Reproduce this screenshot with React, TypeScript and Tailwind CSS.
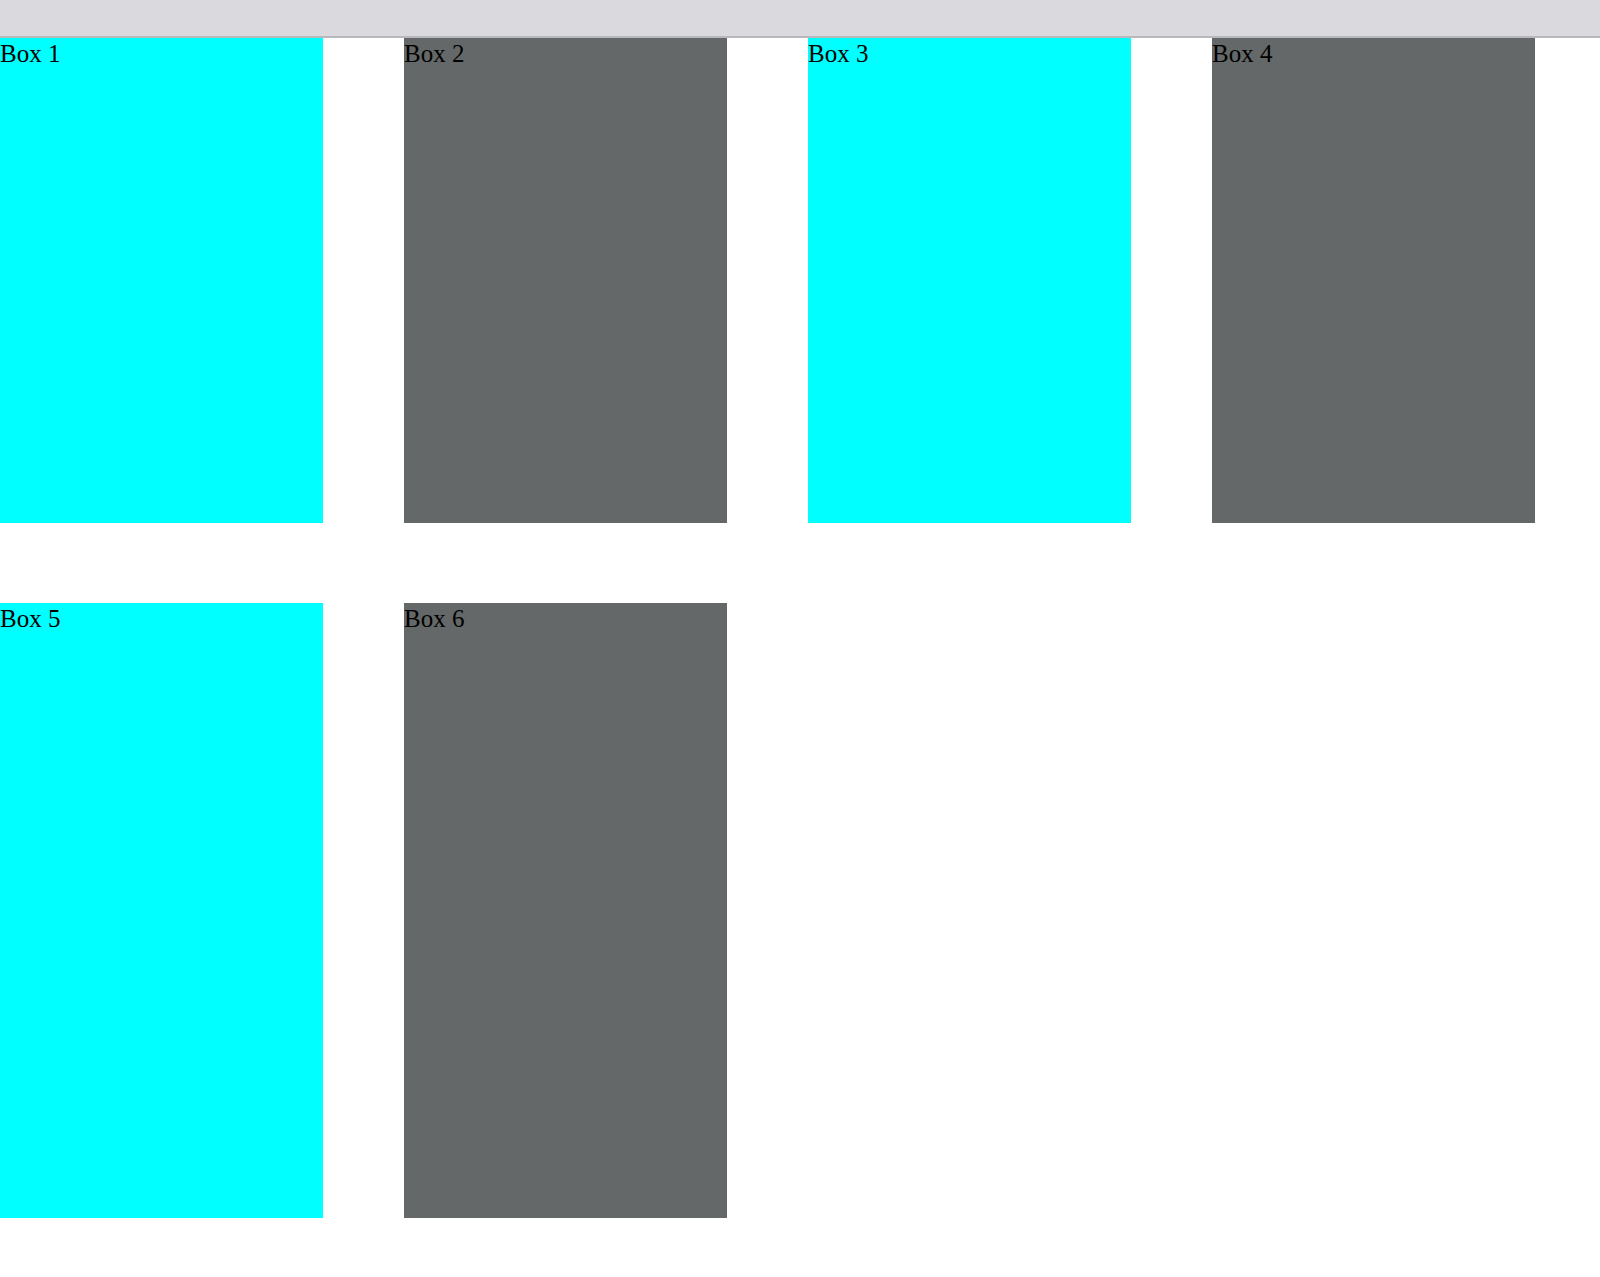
const boxes = [
  { label: 'Box 1', tone: 'bg-[#00ffff]', row: 1 },
  { label: 'Box 2', tone: 'bg-[#646868]', row: 1 },
  { label: 'Box 3', tone: 'bg-[#00ffff]', row: 1 },
  { label: 'Box 4', tone: 'bg-[#646868]', row: 1 },
  { label: 'Box 5', tone: 'bg-[#00ffff]', row: 2 },
  { label: 'Box 6', tone: 'bg-[#646868]', row: 2 },
]

function Box({ label, tone, row }: { label: string; tone: string; row: number }) {
  return (
    <div
      className={`${tone} w-[323px] ${row === 1 ? 'h-[485px]' : 'h-[615px]'} text-[25px] leading-[1.3] text-black`}
      style={{ fontFamily: '"Liberation Serif", "Times New Roman", serif' }}
    >
      {label}
    </div>
  )
}

export default function App() {
  return (
    <div className="min-h-[1277px] w-[1600px] bg-white">
      <header className="h-[38px] border-b-2 border-[#b8b8bc] bg-[#dadade]" />
      <div className="flex flex-wrap gap-x-[81px] gap-y-[80px]">
        {boxes.map((b) => (
          <Box key={b.label} {...b} />
        ))}
      </div>
    </div>
  )
}
